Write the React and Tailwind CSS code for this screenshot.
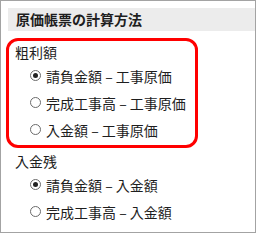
import React from "react";

const font = { fontFamily: '"Noto Sans CJK JP", "Noto Sans", sans-serif' };

function Radio({ checked, label }) {
  return (
    <div className="flex h-[27px] items-center pl-[21px]">
      <span className="flex h-[11px] w-[11px] items-center justify-center rounded-full border border-[#6b6b6b] bg-white">
        {checked && <span className="h-[5px] w-[5px] rounded-full bg-[#222]" />}
      </span>
      <span className="ml-[5px] text-[14px] leading-none text-[#1e1e1e]">{label}</span>
    </div>
  );
}

export default function App() {
  return (
    <div
      className="flex h-[233px] w-[256px] flex-col border border-[#a3a3a3] bg-white"
      style={font}
    >
      {/* 見出し */}
      <div className="ml-[7px] mt-[7px] flex h-[23px] items-center bg-[#ececec] pl-[8px] text-[14px] font-bold text-[#1e1e1e]">
        原価帳票の計算方法
      </div>

      {/* 粗利額（赤枠） */}
      <div className="ml-[5px] mt-[7px] w-[192px] rounded-[12px] border-[3px] border-[#ff0000] pb-[2px] pt-[2px]">
        <div className="flex h-[19px] items-center pl-[6px] text-[14px] text-[#1e1e1e]">粗利額</div>
        <Radio checked label="請負金額 – 工事原価" />
        <Radio label="完成工事高 – 工事原価" />
        <Radio label="入金額 – 工事原価" />
      </div>

      {/* 入金残 */}
      <div className="ml-[8px] mt-[3px]">
        <div className="flex h-[20px] items-center pl-[6px] text-[14px] text-[#1e1e1e]">入金残</div>
        <Radio checked label="請負金額 – 入金額" />
        <Radio label="完成工事高 – 入金額" />
      </div>
    </div>
  );
}
